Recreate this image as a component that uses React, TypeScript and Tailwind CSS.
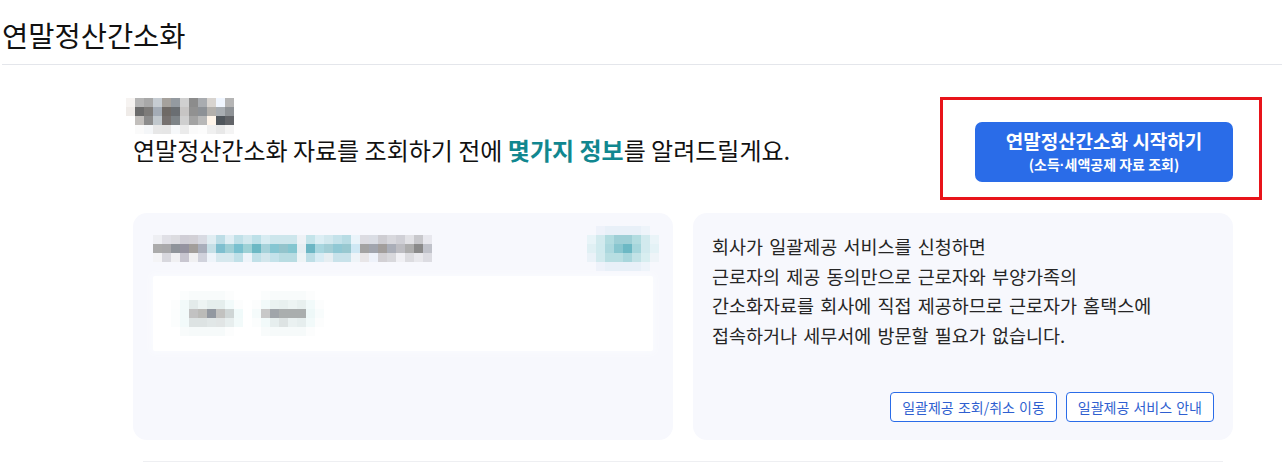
import React from "react";

type Grid = string[][];

function Mosaic({ rows, w = 9, h = 9 }: { rows: Grid; w?: number; h?: number }) {
  return (
    <div className="flex flex-col shrink-0">
      {rows.map((r, i) => (
        <div key={i} className="flex">
          {r.map((c, j) => (
            <div key={j} style={{ width: w, height: h, background: c || "transparent" }} />
          ))}
        </div>
      ))}
    </div>
  );
}

const nameRows: Grid = [
  ["#f6f3f1", "#b5b5b5", "#a8a8a8", "#c6ccd2", "#a5a19c", "#949aa0", "#d0d0d0", "#8c8c8c", "#a9acb0", "#d8d4d0", "#f0f6ff", "#b5b5b5"],
  ["#efebe8", "#6b6b6b", "#7d7b79", "#a4acb6", "#6f6a66", "#6a6e72", "#c7c5c4", "#919191", "#8d9196", "#b3b0ac", "#a8adb2", "#8e9296"],
  ["#ffffff", "#c2bfbc", "#8c8c8c", "#c1c8cd", "#777270", "#7e8488", "#cfcfcf", "#a3a3a3", "#b8b8b8", "#fff5ea", "#50565c", "#626468"],
  ["#ffffff", "#fafafa", "#f4f6f8", "#e7e7e7", "#e6e6e6", "#f6f8fa", "#ebebeb", "#fafafa", "#fcfcfc", "#f0f0f0", "#e8e8e8", "#f4f4f4"],
];

const headRows: Grid = [
  ["#eeeff3", "#e0e0e6", "#dcdce0", "#d0ced6", "#d2d0d6", "#d8dae2", "#e0edf2", "#bddde6", "#e0eef4", "#c0e0e8", "#d2e8ee", "#bde0e8", "#d8ecf2", "#cde6ec", "#cde6ec", "#cde6ec", "#eef2f6", "#c4e4ea", "#dceef4", "#d2e8ee", "#c4e2ea", "#b8dce4", "#eaf4fa", "#dcdce2", "#dadde4", "#cecdd2", "#d8d8dd", "#d0d0d6", "#e2e2e6", "#c8c8cc", "#e8e8ee"],
  ["#ababab", "#a9a9ab", "#8f949a", "#9593a0", "#a29e9b", "#a9aebb", "#c6dfe6", "#7fbfcf", "#9fcfd6", "#79c0cf", "#9ed1d6", "#6cb8c4", "#a6d2da", "#86c6d2", "#93c4cc", "#84c6d0", "#e6eef2", "#6cb6c4", "#a8d6df", "#a2ced6", "#90c8d4", "#98c8d0", "#cfe8f4", "#a3a3a3", "#a1a5ae", "#a29e9c", "#aaaeb8", "#bdbdc2", "#adadad", "#8a8a8a", "#c0c2ca"],
  ["#f4f4f6", "#d8d8de", "#f0f0f2", "#c8c6d0", "#f0f0f2", "#d0d2dc", "#eef4fa", "#d6e8ee", "#d6e8ee", "#c0e0e8", "#eef4fa", "#c0e0e8", "#d2e6ec", "#c4e2ea", "#b8dce2", "#b8dce2", "#eef4f6", "#bddee6", "#d8ecf4", "#e6eef2", "#c8e2ea", "#c8e2ea", "#eef4f8", "#e8e6e8", "#eef2fa", "#d2d0d4", "#d8d8dc", "#f0f0f4", "#dcdce0", "#e8e8ec", "#dcdce2"],
];

const badgeRows: Grid = [
  ["", "#eef2fa", "#e8f0f8", "#e8f0f8", "#e8f0f8", "#e8f0f8", "#eef4fa", ""],
  ["#e8f4f8", "#d2eaee", "#b2dce0", "#9ecfd6", "#9ecfd6", "#b2dce0", "#d2eaee", "#eaf4f8"],
  ["#e0f0f4", "#d0eaee", "#acd8de", "#88c6cf", "#6cb8c4", "#a6d6dc", "#d2eaee", "#e4f2f6"],
  ["#eaf2f8", "#d2eaee", "#b8dee2", "#b8dee2", "#a8d6dc", "#c2e2e6", "#d8eef0", "#eef4f8"],
  ["", "#eef2fa", "#e8f0f8", "#e8f0f8", "#e8f0f8", "#e8f0f8", "#eef4fa", ""],
];

const chip1: Grid = [
  ["", "#fbfdfd", "#f8fbfb", "#f8fbfb", "#f8fbfb", "#f8fbfb", "#fcfdfd", ""],
  ["#fcfdfd", "#f2fafa", "#e3ebea", "#edf4f3", "#e5eeed", "#e5eeed", "#f2fafa", "#fcfdfd"],
  ["#fbfdfd", "#f2fafa", "#c2c2c2", "#bbbbb8", "#9298a0", "#c2c2c0", "#cfd6d6", "#f0fafa"],
  ["#fbfdfd", "#f2fafa", "#dde3e3", "#dde3e3", "#e1e7e7", "#e1e5e5", "#e7eeee", "#f2fafa"],
  ["", "#f8fbfb", "#f6fafa", "#f6fafa", "#f6fafa", "#f6fafa", "#fcfdfd", ""],
];

const chip2: Grid = [
  ["", "#fbfdfd", "#f8fbfb", "#f8fbfb", "#f8fbfb", "#f8fbfb", "#fcfdfd", ""],
  ["#fcfdfd", "#f2fafa", "#eaf2f1", "#e8f0ef", "#edf4f3", "#e8f0ef", "#f2fafa", "#fcfdfd"],
  ["#f5fbfb", "#c8c8c8", "#a0a5aa", "#aaaeae", "#aaaeae", "#aaaeae", "#eef8f8", "#f8fcfc"],
  ["#fbfdfd", "#f2fafa", "#e6eeee", "#dde3e3", "#eaf1f1", "#e6eeee", "#f2fafa", "#fcfdfd"],
  ["", "#f8fbfb", "#f6fafa", "#f6fafa", "#f6fafa", "#f6fafa", "#fcfdfd", ""],
];

export default function App() {
  return (
    <div className="w-[1282px] h-[462px] overflow-hidden bg-white text-[#111] font-['Noto_Sans_CJK_KR','Noto_Sans',sans-serif]">
      {/* page title */}
      <div className="ml-[2px] h-[65px] border-b border-[#e4e6eb] flex items-center">
        <h1 className="text-[28.5px] leading-[32px] font-normal mt-[6px] text-[#111]">연말정산간소화</h1>
      </div>

      <div className="ml-[133px] w-[1100px]">
        {/* intro row */}
        <div className="mt-[33px] flex justify-between items-start">
          <div className="flex flex-col">
            <div className="-ml-[7px]">
              <Mosaic rows={nameRows} w={9} h={9} />
            </div>
            <p className="text-[24px] leading-[30px] mt-[1px] text-[#111]">
              연말정산간소화 자료를 조회하기 전에 <span className="text-[#11878f] font-bold">몇가지 정보</span>를 알려드릴게요.
            </p>
          </div>
          <div className="relative mt-[24px]">
            <div className="absolute -left-[35px] -top-[25px] w-[322px] h-[103px] border-[3px] border-[#e8141a] pointer-events-none" />
            <button className="w-[258px] h-[60px] rounded-[7px] bg-[#2a6ce8] text-white flex flex-col items-center justify-center">
              <span className="text-[19px] font-bold leading-[22px]">연말정산간소화 시작하기</span>
              <span className="text-[14px] font-bold leading-[18px] mt-[3px]">
                (소득<span className="font-['Liberation_Sans',sans-serif]">·</span>세액공제 자료 조회)
              </span>
            </button>
          </div>
        </div>

        {/* cards */}
        <div className="mt-[31px] grid grid-cols-2 gap-[20px]">
          <div className="h-[227px] rounded-[14px] bg-[#f7f8fd] pt-[13px] px-[20px]">
            <div className="flex justify-between items-start">
              <div className="mt-[9px]">
                <Mosaic rows={headRows} w={9} h={9} />
              </div>
              <div className="-mr-[6px]">
                <Mosaic rows={badgeRows} w={9} h={9} />
              </div>
            </div>
            <div className="mt-[5px] h-[75px] bg-white rounded-[2px] shadow-[0_0_6px_2px_rgba(250,251,254,1)] flex items-center gap-[9px] pl-[18px]">
              <Mosaic rows={chip1} w={9} h={9} />
              <Mosaic rows={chip2} w={9} h={9} />
            </div>
          </div>

          <div className="h-[227px] rounded-[14px] bg-[#f7f8fd] pt-[19px] pb-[18px] px-[19px] flex flex-col justify-between">
            <p className="text-[18.5px] leading-[29.5px] text-[#262626] [word-spacing:2px]">
              회사가 일괄제공 서비스를 신청하면
              <br />
              근로자의 제공 동의만으로 근로자와 부양가족의
              <br />
              간소화자료를 회사에 직접 제공하므로 근로자가 홈택스에
              <br />
              접속하거나 세무서에 방문할 필요가 없습니다.
            </p>
            <div className="flex justify-end gap-[9px]">
              <button className="h-[30px] px-[11px] rounded-[4px] border border-[#2a6ce8] bg-white text-[14px] leading-[28px] text-[#2f5fd0] [word-spacing:1px]">
                일괄제공 조회/취소 이동
              </button>
              <button className="h-[30px] px-[11px] rounded-[4px] border border-[#2a6ce8] bg-white text-[14px] leading-[28px] text-[#2f5fd0] [word-spacing:1px]">
                일괄제공 서비스 안내
              </button>
            </div>
          </div>
        </div>

        <div className="mt-[21px] mx-[10px] border-t border-[#eeeff2]" />
      </div>
    </div>
  );
}
